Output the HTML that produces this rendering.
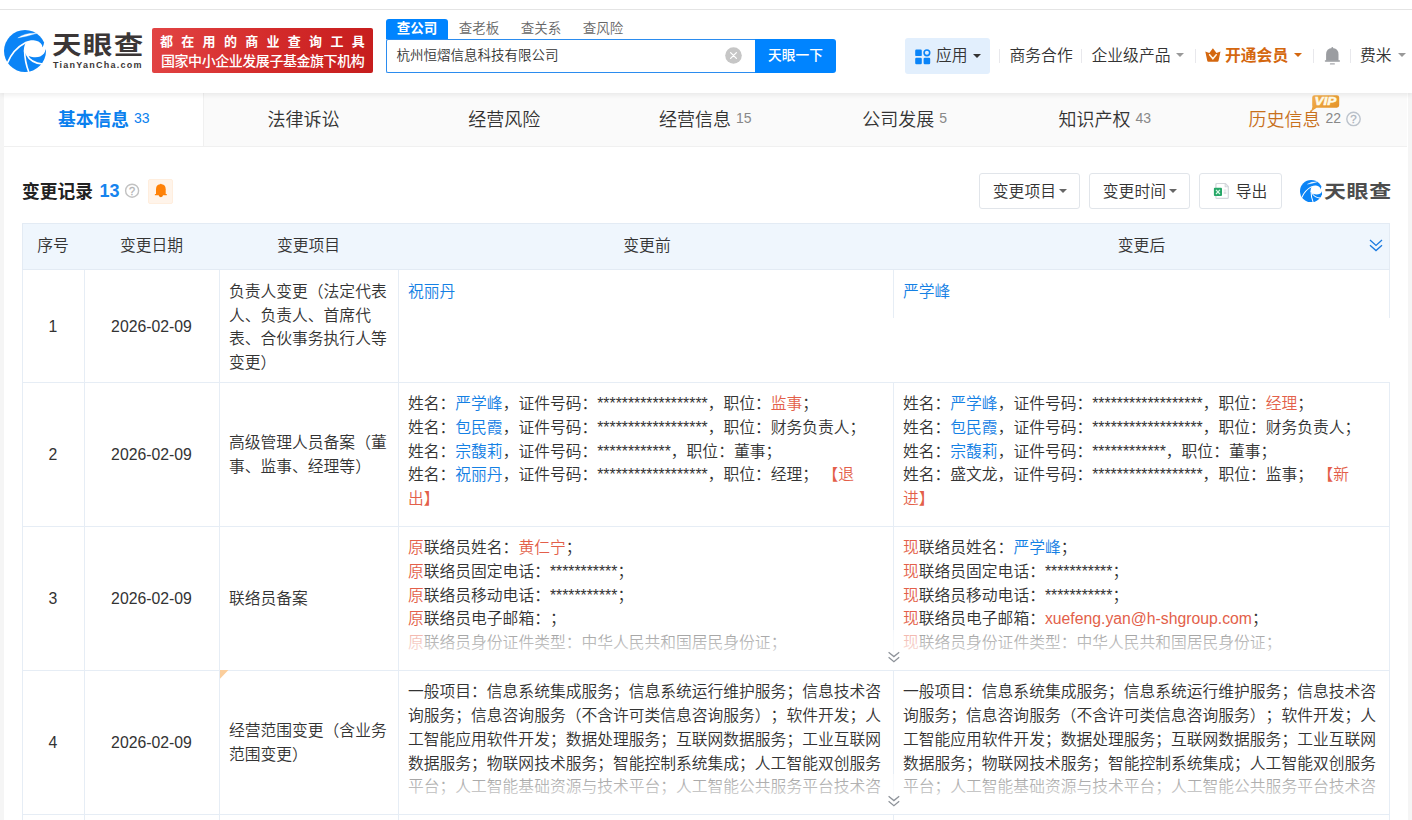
<!DOCTYPE html>
<html lang="zh-CN">
<head>
<meta charset="utf-8">
<title>天眼查 - 变更记录</title>
<style>
*{box-sizing:border-box;margin:0;padding:0}
html,body{width:1412px;height:820px;overflow:hidden;background:#f5f5f5}
body{font-weight:350;text-spacing-trim:space-all;font-family:"Liberation Sans","Noto Sans CJK SC",sans-serif;color:#333;font-size:14px;position:relative}
a{text-decoration:none;color:inherit}
.abs{position:absolute}
.z{z-index:6}
#logo-svg,#logo-cn,#logo-en,#banner,#stabs,#sinput,#sclear,#sbtn,#app,.nav,.vsep,.caret{z-index:6}
/* top bar */
#topstrip{position:absolute;left:0;top:0;width:1412px;height:9px;background:#fff;z-index:7}
#topline{position:absolute;left:0;top:9px;width:1412px;height:1px;background:#e4e4e4;z-index:7}
#header{position:absolute;left:0;top:10px;width:1412px;height:83px;background:#fff;box-shadow:0 2px 5px rgba(0,0,0,.075);z-index:5}
/* main */
#main{position:absolute;left:4px;top:93px;width:1404px;height:727px;background:#fff}
#tabsbg{position:absolute;left:4px;top:93px;width:1403px;height:54px;background:#fafafa;border-bottom:1px solid #f0f0f0}
#tabs{position:absolute;left:0;top:0;width:1403px;height:54px;background:#fafafa;border-bottom:1px solid #eee}
#tabs .tab{position:absolute;top:0;height:53px;line-height:53px;font-size:18px;color:#333;white-space:nowrap}
#tabs .tab small{font-size:13px;color:#888;margin-left:4px;position:relative;top:-1px}
#tabs .act{left:0;width:198px;background:#fff;color:#0084ff;font-weight:bold;text-align:center;height:54px}
#tabs .act small{color:#0084ff;font-weight:normal}

/* header parts */
#logo-svg{position:absolute;left:4px;top:30px;width:42px;height:42px}
#logo-cn{position:absolute;left:51.7px;top:27.6px;transform:scale(1.075,.892);transform-origin:0 0;font-size:27.5px;font-weight:bold;letter-spacing:1.2px;color:#3b3636;line-height:40px;white-space:nowrap}
#logo-en{position:absolute;left:53px;top:59px;font-size:9px;font-weight:bold;letter-spacing:1.25px;color:#3b3636;line-height:12px;white-space:nowrap}
#banner{position:absolute;left:152px;top:28px;width:221px;height:45px;border-radius:2px;background:linear-gradient(100deg,#e24444 0%,#d32a2a 55%,#c61d1d 100%);color:#fff;font-weight:bold;white-space:nowrap}
#banner .l1{position:absolute;left:8px;top:5px;font-size:13px;letter-spacing:8.3px;line-height:18px}
#banner .l2{position:absolute;left:9px;top:22.5px;font-size:14px;letter-spacing:-0.45px;line-height:20px;font-weight:500}
#stabs{position:absolute;left:386px;top:19px;height:20px;white-space:nowrap;font-size:13.5px;line-height:19px;color:#666}
#stabs span{display:inline-block;width:62px;height:20px;text-align:center;float:left}
#stabs .on{background:#0084ff;color:#fff;font-weight:bold;border-radius:3px 3px 0 0}
#sinput{position:absolute;left:386px;top:39px;width:370px;height:34px;border:1px solid #2b8cef;border-right:0;border-radius:2px 0 0 2px;background:#fff;font-size:13.5px;line-height:32px;padding-left:9.5px;color:#333;white-space:nowrap}
#sclear{position:absolute;left:725px;top:47px;width:17px;height:17px}
#sbtn{position:absolute;left:755px;top:39px;width:81px;height:34px;background:#0084ff;color:#fff;font-size:13.7px;line-height:33px;text-align:center;border-radius:0 3px 3px 0;white-space:nowrap;font-weight:500}
#app{position:absolute;left:905px;top:38px;width:85px;height:36px;background:#e2effd;border-radius:3px}
.nav{position:absolute;top:43px;height:26px;line-height:26px;font-size:15.8px;color:#333;white-space:nowrap}
.vsep{position:absolute;top:49px;width:1px;height:14px;background:#e8e8ec}
.caret{position:absolute;width:0;height:0;border-left:4px solid transparent;border-right:4px solid transparent;border-top:4.5px solid #333}

/* tabs */
.tab{position:absolute;top:93px;height:53px;line-height:54px;font-size:18px;color:#333;white-space:nowrap}
.tab small{font-size:14px;color:#888;margin-left:5px;position:relative;top:-3.2px}
/* section */
#sect{position:absolute;left:22px;top:177px;height:30px;line-height:30px;font-size:17.75px;font-weight:bold;color:#222;white-space:nowrap}
#sect b{color:#1684ee;font-size:18px;margin-left:6.6px;position:relative;top:-1px}
.qm{position:absolute;border:1.4px solid #bcc3cc;border-radius:50%;color:#adb4bd;-webkit-text-stroke:.3px #adb4bd;text-align:center;font-family:"Liberation Sans",sans-serif}
#bellbox{position:absolute;left:148.2px;top:179.2px;width:24.6px;height:24.6px;background:#fff4ea;border:1px solid #ffeede;border-radius:2px}
.tbtn{position:absolute;top:173px;height:36px;border:1px solid #e1e5ea;border-radius:3px;background:#fff;font-size:15.8px;line-height:35px;color:#333;white-space:nowrap}
/* table */
#thead{position:absolute;left:22px;top:223px;width:1368px;height:47px;background:#eff6fd;border:1px solid #e3ebf4}
.th{position:absolute;top:223px;height:46px;line-height:45px;font-size:15.8px;color:#333;text-align:center;white-space:nowrap}
.hl{position:absolute;left:22px;width:1368px;height:1px;background:#e6edf5}
.vl{position:absolute;width:1px;background:#e6edf5}
.cc{position:absolute;font-size:15.8px;color:#333;text-align:center;white-space:nowrap;line-height:24px;height:24px}
.c3{position:absolute;left:229px;width:164px;font-size:15.78px;line-height:23.7px;color:#333}
.c4,.c5{position:absolute;width:476px;font-size:15.78px;line-height:23.8px;color:#333;height:119px;overflow:hidden}
.c4{left:408px}.c5{left:903px}
.bl{color:#1480e4}.rd{color:#e35f4a}
.fade{position:absolute;left:399px;width:990px;height:40px;background:linear-gradient(180deg,rgba(255,255,255,.5),#fff)}
.chev{position:absolute;width:14px;height:12px}
</style>
</head>
<body>
<div id="topstrip"></div>
<div id="topline"></div>
<div id="header"></div>
<svg id="logo-svg" class="z" viewBox="0 0 42 42">
  <circle cx="21" cy="21" r="21" fill="#0b84f6"/>
  <path d="M21 12 C24 10.6 27 10.2 29.5 10.3 C33 10.5 36.5 12 37.8 14.8 C38.4 16 38.3 17 37.9 17.6 L38.9 16.5 Q39.7 15 40.1 12.6 L43 12.6 L43 19.4 L41.6 19.4 C41.3 22 39.5 24.8 36.2 26.4 C33.5 27.5 29 27.6 24.4 25.9 L22.3 24.8 L19.8 21.6 C19.7 19 20.2 15.5 21.4 13.4Z" fill="#fff"/>
  <path d="M3.1 33.6 C6.3 25.5 12.5 17.3 21.8 12.5" fill="none" stroke="#fff" stroke-width="1.6"/>
  <path d="M13.8 7.9 Q21 2.6 33 3.3 Q23.5 6.4 13.8 7.9Z" fill="#fff" stroke="#fff" stroke-width=".3" stroke-linejoin="round"/>
  <path d="M20.6 20.5 C20.7 27 21.6 34 24.8 42" fill="none" stroke="#fff" stroke-width="1.65"/>
  <path d="M22.4 24.2 C25 29.5 30 33.6 38.6 34" fill="none" stroke="#fff" stroke-width="1.65"/>
</svg>
<div id="logo-cn" class="z">天眼查</div>
<div id="logo-en" class="z">TianYanCha.com</div>
<div id="banner" class="z"><div class="l1">都在用的商业查询工具</div><div class="l2">国家中小企业发展子基金旗下机构</div></div>
<div id="stabs" class="z"><span class="on">查公司</span><span>查老板</span><span>查关系</span><span>查风险</span></div>
<div id="sinput" class="z">杭州恒熠信息科技有限公司</div>
<svg id="sclear" class="z" viewBox="0 0 17 17"><circle cx="8.5" cy="8.5" r="8.3" fill="#c6c6c6"/><path d="M5.6 5.6 L11.4 11.4 M11.4 5.6 L5.6 11.4" stroke="#fff" stroke-width="1.3" stroke-linecap="round"/></svg>
<div id="sbtn" class="z">天眼一下</div>
<div id="app" class="z"></div>
<svg class="z abs" style="left:915.4px;top:48.5px;width:16px;height:16px" viewBox="0 0 16 16">
  <rect x="0.2" y="0.5" width="6.6" height="6.6" rx="1.2" fill="#0a84f8"/>
  <rect x="0.2" y="8.7" width="6.6" height="6.6" rx="1.2" fill="#0a84f8"/>
  <rect x="8.6" y="8.7" width="6.6" height="6.6" rx="1.2" fill="#0a84f8"/>
  <circle cx="11.9" cy="3.8" r="2.8" fill="none" stroke="#0a84f8" stroke-width="1.6"/>
</svg>
<div class="nav z" style="left:936px">应用</div>
<div class="caret z" style="left:972.7px;top:54px"></div>
<div class="vsep z" style="left:999px"></div>
<div class="nav z" style="left:1009.5px">商务合作</div>
<div class="vsep z" style="left:1081px"></div>
<div class="nav z" style="left:1091.5px">企业级产品</div>
<div class="caret z" style="left:1175.5px;top:52.5px;border-top-color:#999"></div>
<div class="vsep z" style="left:1195px"></div>
<svg class="z abs" style="left:1205px;top:48px;width:16px;height:14px" viewBox="0 0 16 14">
  <path d="M0.3 3.4 L4.3 4.9 L7.9 0.2 L11.5 4.9 L15.5 3.4 L13.5 13 Q13.3 13.8 12.5 13.8 L3.3 13.8 Q2.5 13.8 2.3 13 Z" fill="#d4670f"/>
  <path d="M4.6 6.7 L7.9 10.8 L11.2 6.7" fill="none" stroke="#fff4e2" stroke-width="1.5" stroke-linejoin="miter" stroke-linecap="round"/>
</svg>
<div class="nav z" style="left:1225px;color:#d4670f;font-weight:bold">开通会员</div>
<div class="caret z" style="left:1293.5px;top:52.5px;border-top-color:#d4670f"></div>
<div class="vsep z" style="left:1313px"></div>
<svg class="z abs" style="left:1324px;top:46px;width:17px;height:20px" viewBox="0 0 17 20">
  <path d="M2.1 14.8 V8.6 Q2.1 1.9 8.3 1.9 Q14.5 1.9 14.5 8.6 V14.8Z" fill="#9b9da1"/>
  <circle cx="8.3" cy="1.9" r=".9" fill="#9b9da1"/>
  <rect x="0.8" y="14.2" width="15.2" height="1.5" rx=".6" fill="#9b9da1"/>
  <rect x="5.9" y="17.3" width="5" height="1.2" rx=".5" fill="#a6a8ac"/>
</svg>
<div class="vsep z" style="left:1350px"></div>
<div class="nav z" style="left:1360px">费米</div>
<div class="caret z" style="left:1397.5px;top:52.5px;border-top-color:#999"></div>
<div id="main"></div>
<div id="tabsbg"></div>

<div class="tab" style="left:4px;width:200px;background:#fff;height:53px;border-right:1px solid #f0f0f0"></div>
<div class="tab" style="left:58px;color:#0a80ee;font-weight:bold;font-size:17.75px">基本信息<small style="color:#0a80ee;font-weight:normal">33</small></div>
<div class="tab" style="left:267.6px">法律诉讼</div>
<div class="tab" style="left:468.3px">经营风险</div>
<div class="tab" style="left:659px">经营信息<small>15</small></div>
<div class="tab" style="left:862.3px">公司发展<small>5</small></div>
<div class="tab" style="left:1058.5px">知识产权<small>43</small></div>
<div class="tab" style="left:1248.5px;color:#c8701c">历史信息<small>22</small></div>
<svg class="abs" style="left:1345px;top:110px;width:18px;height:18px" viewBox="0 0 18 18"><circle cx="8.5" cy="8.9" r="6.7" fill="none" stroke="#bcc3cc" stroke-width="1.4"/><text x="8.5" y="12.9" font-family="Liberation Sans, sans-serif" font-size="11.5" fill="#adb4bd" stroke="#adb4bd" stroke-width=".3" text-anchor="middle">?</text></svg>
<svg class="abs" style="left:1311px;top:95px;width:29px;height:17px" viewBox="0 0 29 17">
  <defs><linearGradient id="vg" x1="0" y1="0" x2="1" y2="1"><stop offset="0" stop-color="#f3b050"/><stop offset="1" stop-color="#e28f22"/></linearGradient></defs>
  <path d="M3.6 0.2 H25.8 Q28.2 0.2 28.2 2.6 V10.3 Q28.2 12.7 25.8 12.7 H5.6 L0.2 16.4 L1.4 11.8 Q1.2 11.2 1.2 10.3 V2.6 Q1.2 0.2 3.6 0.2Z" fill="url(#vg)"/>
  <text x="3.6" y="10.3" font-family="Liberation Sans, sans-serif" font-size="10.4" font-weight="bold" font-style="italic" fill="#fffbe8" stroke="#fffbe8" stroke-width=".5" textLength="21.6" lengthAdjust="spacingAndGlyphs">VIP</text>
</svg>

<div id="sect">变更记录<b>13</b></div>
<svg class="abs" style="left:123px;top:182px;width:18px;height:18px" viewBox="0 0 18 18"><circle cx="9.1" cy="8.7" r="6.5" fill="none" stroke="#c2c2c2" stroke-width="1.4"/><text x="9.1" y="12.6" font-family="Liberation Sans, sans-serif" font-size="11" fill="#b4b4b4" stroke="#b4b4b4" stroke-width=".3" text-anchor="middle">?</text></svg>
<div id="bellbox"></div>
<svg class="abs" style="left:154px;top:183px;width:14px;height:15px" viewBox="0 0 14 15">
  <path d="M2 11.6 V6.3 Q2 1.3 6.85 1.3 Q11.7 1.3 11.7 6.3 V11.6Z" fill="#ff8208"/>
  <circle cx="6.85" cy="1.5" r=".8" fill="#ff8208"/>
  <rect x="0.8" y="11.1" width="12.1" height="1.1" rx=".5" fill="#ff8208"/>
  <path d="M4.7 12.1 A2.15 2.15 0 0 0 9 12.1Z" fill="#f27c08"/>
</svg>
<div class="tbtn" style="left:979px;width:101px;padding-left:12.8px">变更项目</div>
<div class="caret" style="left:1059px;top:189px;border-top-color:#666"></div>
<div class="tbtn" style="left:1089px;width:101px;padding-left:12.8px">变更时间</div>
<div class="caret" style="left:1169px;top:189px;border-top-color:#666"></div>
<div class="tbtn" style="left:1199px;width:83px;padding-left:35.7px;line-height:36px">导出</div>
<svg class="abs" style="left:1213px;top:182px;width:17px;height:18px" viewBox="0 0 17 18">
  <path d="M3.9 1.5 H12.4 L15.3 4.6 V15.4 Q15.3 16.4 14.3 16.4 H3.9 Q2.9 16.4 2.9 15.4 V2.5 Q2.9 1.5 3.9 1.5Z" fill="#fff" stroke="#d3d6db" stroke-width="1.2"/>
  <path d="M12.2 1.6 V4.8 H15.2" fill="none" stroke="#d3d6db" stroke-width="1.1"/>
  <rect x="10.7" y="7.6" width="2.7" height="1" fill="#d9dbdf"/><rect x="10.7" y="9.4" width="2.7" height="2.6" fill="#dfe1e4"/>
  <rect x="0.9" y="5.8" width="8.1" height="8.2" rx="1" fill="#27a768"/>
  <path d="M3 7.8 L6.9 12 M6.9 7.8 L3 12" stroke="#d8f8e6" stroke-width="1.2"/>
</svg>
<svg class="abs" style="left:1300px;top:180px;width:22.4px;height:22.4px" viewBox="0 0 42 42">
  <circle cx="21" cy="21" r="21" fill="#0b84f6"/>
  <path d="M21 12 C24 10.6 27 10.2 29.5 10.3 C33 10.5 36.5 12 37.8 14.8 C38.4 16 38.3 17 37.9 17.6 L38.9 16.5 Q39.7 15 40.1 12.6 L43 12.6 L43 19.4 L41.6 19.4 C41.3 22 39.5 24.8 36.2 26.4 C33.5 27.5 29 27.6 24.4 25.9 L22.3 24.8 L19.8 21.6 C19.7 19 20.2 15.5 21.4 13.4Z" fill="#fff"/>
  <path d="M3.1 33.6 C6.3 25.5 12.5 17.3 21.8 12.5" fill="none" stroke="#fff" stroke-width="1.9"/>
  <path d="M13.8 7.9 Q21 2.6 33 3.3 Q23.5 6.4 13.8 7.9Z" fill="#fff" stroke="#fff" stroke-width=".5" stroke-linejoin="round"/>
  <path d="M20.6 20.5 C20.7 27 21.6 34 24.8 42" fill="none" stroke="#fff" stroke-width="1.9"/>
  <path d="M22.4 24.2 C25 29.5 30 33.6 38.6 34" fill="none" stroke="#fff" stroke-width="1.9"/>
</svg>
<div class="abs" style="left:1324px;top:179px;transform:scale(1.045,.88);transform-origin:0 0;font-size:21px;font-weight:bold;letter-spacing:.6px;color:#4d4d4d;line-height:30px;white-space:nowrap">天眼查</div>

<div id="thead"></div>
<div class="th" style="left:22px;width:62px">序号</div>
<div class="th" style="left:84px;width:135px">变更日期</div>
<div class="th" style="left:219px;width:179px">变更项目</div>
<div class="th" style="left:399px;width:496px">变更前</div>
<div class="th" style="left:893px;width:497px">变更后</div>
<svg class="chev" style="left:1369px;top:239px;width:14px;height:13px" viewBox="0 0 14 13"><path d="M1 1 L7 6.4 L13 1 M1 6.2 L7 11.6 L13 6.2" fill="none" stroke="#1a7ae0" stroke-width="1.3"/></svg>

<!-- grid lines -->
<div class="vl" style="left:22px;top:270px;height:550px"></div>
<div class="vl" style="left:84px;top:270px;height:550px"></div>
<div class="vl" style="left:219px;top:270px;height:550px"></div>
<div class="vl" style="left:398px;top:270px;height:550px"></div>
<div class="vl" style="left:893px;top:270px;height:48px"></div>
<div class="vl" style="left:1389px;top:270px;height:48px"></div>
<div class="vl" style="left:893px;top:382px;height:438px"></div>
<div class="vl" style="left:1389px;top:382px;height:438px"></div>
<div class="hl" style="top:382px"></div>
<div class="hl" style="top:526px"></div>
<div class="hl" style="top:670px"></div>
<div class="hl" style="top:814px"></div>

<!-- row 1 -->
<div class="cc" style="left:22px;width:62px;top:315px">1</div>
<div class="cc" style="left:84px;width:135px;top:315px">2026-02-09</div>
<div class="c3" style="top:279.8px">负责人变更（法定代表人、负责人、首席代表、合伙事务执行人等变更）</div>
<div class="c4" style="top:279.6px;height:24px"><span class="bl">祝丽丹</span></div>
<div class="c5" style="top:279.6px;height:24px"><span class="bl">严学峰</span></div>

<!-- row 2 -->
<div class="cc" style="left:22px;width:62px;top:443px">2</div>
<div class="cc" style="left:84px;width:135px;top:443px">2026-02-09</div>
<div class="c3" style="top:431.2px">高级管理人员备案（董事、监事、经理等）</div>
<div class="c4" style="top:392px">姓名：<span class="bl">严学峰</span>，证件号码：******************，职位：<span class="rd">监事</span>；<br>姓名：<span class="bl">包民霞</span>，证件号码：******************，职位：财务负责人；<br>姓名：<span class="bl">宗馥莉</span>，证件号码：************，职位：董事；<br>姓名：<span class="bl">祝丽丹</span>，证件号码：******************，职位：经理； <span class="rd">【退出】</span></div>
<div class="c5" style="top:392px">姓名：<span class="bl">严学峰</span>，证件号码：******************，职位：<span class="rd">经理</span>；<br>姓名：<span class="bl">包民霞</span>，证件号码：******************，职位：财务负责人；<br>姓名：<span class="bl">宗馥莉</span>，证件号码：************，职位：董事；<br>姓名：盛文龙，证件号码：******************，职位：监事； <span class="rd">【新进】</span></div>

<!-- row 3 -->
<div class="cc" style="left:22px;width:62px;top:587px">3</div>
<div class="cc" style="left:84px;width:135px;top:587px">2026-02-09</div>
<div class="c3" style="top:587px">联络员备案</div>
<div class="c4" style="top:536px"><span class="rd">原</span>联络员姓名：<span class="rd">黄仁宁</span>；<br><span class="rd">原</span>联络员固定电话：***********；<br><span class="rd">原</span>联络员移动电话：***********；<br><span class="rd">原</span>联络员电子邮箱：；<br><span class="rd">原</span>联络员身份证件类型：中华人民共和国居民身份证；</div>
<div class="c5" style="top:536px"><span class="rd">现</span>联络员姓名：<span class="bl">严学峰</span>；<br><span class="rd">现</span>联络员固定电话：***********；<br><span class="rd">现</span>联络员移动电话：***********；<br><span class="rd">现</span>联络员电子邮箱：<span class="rd">xuefeng.yan@h-shgroup.com</span>；<br><span class="rd">现</span>联络员身份证件类型：中华人民共和国居民身份证；</div>
<div class="fade" style="top:630px"></div>
<svg class="chev" style="left:887px;top:651px" viewBox="0 0 14 12"><path d="M1.6 1.2 L6.9 5.6 L12.2 1.2 M1.6 6.3 L6.9 10.7 L12.2 6.3" fill="none" stroke="#8d9299" stroke-width="1.25"/></svg>

<!-- row 4 -->
<div class="cc" style="left:22px;width:62px;top:731px">4</div>
<div class="cc" style="left:84px;width:135px;top:731px">2026-02-09</div>
<svg class="abs" style="left:220px;top:670px;width:9px;height:9px" viewBox="0 0 9 9"><path d="M0 0 H8.4 L0 8.8Z" fill="#fbce9c"/></svg>
<div class="c3" style="top:719px">经营范围变更（含业务范围变更）</div>
<div class="c4" style="top:680.3px">一般项目：信息系统集成服务；信息系统运行维护服务；信息技术咨询服务；信息咨询服务（不含许可类信息咨询服务）；软件开发；人工智能应用软件开发；数据处理服务；互联网数据服务；工业互联网数据服务；物联网技术服务；智能控制系统集成；人工智能双创服务平台；人工智能基础资源与技术平台；人工智能公共服务平台技术咨询服务；人工智能行业应用系统集成服务；计算机系统服务</div>
<div class="c5" style="top:680.3px">一般项目：信息系统集成服务；信息系统运行维护服务；信息技术咨询服务；信息咨询服务（不含许可类信息咨询服务）；软件开发；人工智能应用软件开发；数据处理服务；互联网数据服务；工业互联网数据服务；物联网技术服务；智能控制系统集成；人工智能双创服务平台；人工智能基础资源与技术平台；人工智能公共服务平台技术咨询服务；人工智能行业应用系统集成服务；计算机系统服务</div>
<div class="fade" style="top:774px"></div>
<svg class="chev" style="left:887px;top:795px" viewBox="0 0 14 12"><path d="M1.6 1.2 L6.9 5.6 L12.2 1.2 M1.6 6.3 L6.9 10.7 L12.2 6.3" fill="none" stroke="#8d9299" stroke-width="1.25"/></svg>
</body>
</html>
